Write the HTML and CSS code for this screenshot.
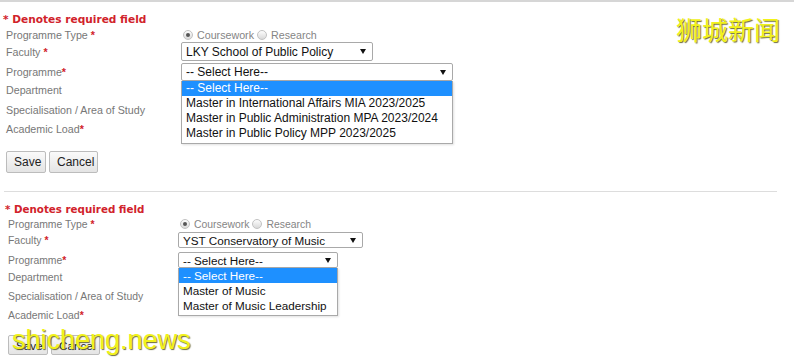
FILE: index.html
```html
<!DOCTYPE html>
<html>
<head>
    <title>Programme Selection</title>
    <link rel="stylesheet" href="styles.css">
</head>
<body>
    <div class="topline"></div>

    <div class="form-block first">
        <div class="required">* Denotes required field</div>
        <div class="row row-type">
            <div class="label">Programme Type <span class="req">*</span></div>
            <div class="field radios">
                <span class="radio checked"></span><span class="radio-text">Coursework</span>
                <span class="radio"></span><span class="radio-text">Research</span>
            </div>
        </div>
        <div class="row row-faculty">
            <div class="label">Faculty <span class="req">*</span></div>
            <div class="field">
                <div class="select faculty-select"><span>LKY School of Public Policy</span><span class="arrow"></span></div>
            </div>
        </div>
        <div class="row row-programme">
            <div class="label">Programme<span class="req">*</span></div>
            <div class="field">
                <div class="select programme-select"><span>-- Select Here--</span><span class="arrow"></span></div>
                <ul class="dropdown">
                    <li class="selected">-- Select Here--</li>
                    <li>Master in International Affairs MIA 2023/2025</li>
                    <li>Master in Public Administration MPA 2023/2024</li>
                    <li>Master in Public Policy MPP 2023/2025</li>
                </ul>
            </div>
        </div>
        <div class="row row-dept">
            <div class="label">Department</div>
        </div>
        <div class="row row-spec">
            <div class="label">Specialisation / Area of Study</div>
        </div>
        <div class="row row-load">
            <div class="label">Academic Load<span class="req">*</span></div>
        </div>
        <div class="buttons">
            <button type="button" class="btn btn-save">Save</button>
            <button type="button" class="btn btn-cancel">Cancel</button>
        </div>
    </div>

    <div class="divider"></div>

    <div class="form-block second">
        <div class="required">* Denotes required field</div>
        <div class="row row-type">
            <div class="label">Programme Type <span class="req">*</span></div>
            <div class="field radios">
                <span class="radio checked"></span><span class="radio-text">Coursework</span>
                <span class="radio"></span><span class="radio-text">Research</span>
            </div>
        </div>
        <div class="row row-faculty">
            <div class="label">Faculty <span class="req">*</span></div>
            <div class="field">
                <div class="select faculty-select"><span>YST Conservatory of Music</span><span class="arrow"></span></div>
            </div>
        </div>
        <div class="row row-programme">
            <div class="label">Programme<span class="req">*</span></div>
            <div class="field">
                <div class="select programme-select"><span>-- Select Here--</span><span class="arrow"></span></div>
                <ul class="dropdown">
                    <li class="selected">-- Select Here--</li>
                    <li>Master of Music</li>
                    <li>Master of Music Leadership</li>
                </ul>
            </div>
        </div>
        <div class="row row-dept">
            <div class="label">Department</div>
        </div>
        <div class="row row-spec">
            <div class="label">Specialisation / Area of Study</div>
        </div>
        <div class="row row-load">
            <div class="label">Academic Load<span class="req">*</span></div>
        </div>
        <div class="buttons">
            <button type="button" class="btn btn-save">Save</button>
            <button type="button" class="btn btn-cancel">Cancel</button>
        </div>
    </div>

    <div class="watermark watermark-cn">狮城新闻</div>
    <div class="watermark watermark-en">shicheng.news</div>
</body>
</html>
```

FILE: styles.css
```css
body {
    margin: 0;
    padding: 0;
    width: 794px;
    height: 364px;
    overflow: hidden;
    background-color: #ffffff;
    font-family: "Liberation Sans", Arial, sans-serif;
    position: relative;
}

.topline {
    height: 2px;
    background-color: #d6d6d6;
}

/* form blocks */
.form-block {
    --label-size: 10.7px;
    --field-size: 12px;
    --label-width: 175px;
}

.first {
    padding: 9px 0 0 6px;
}

.second {
    --label-size: 10.4px;
    --field-size: 11.7px;
    --label-width: 170px;
    padding: 10px 0 0 8px;
}

.required {
    font-family: "DejaVu Sans", Verdana, sans-serif;
    font-weight: bold;
    font-size: 10.6px;
    line-height: 16px;
    color: #d1222b;
    margin-left: -3px;
}

.second .required {
    font-size: 10.3px;
    line-height: 15px;
}

.row {
    display: flex;
    align-items: center;
}

.label {
    width: var(--label-width);
    flex-shrink: 0;
    font-size: var(--label-size);
    color: #777777;
    white-space: nowrap;
}

.req {
    color: #d1222b;
    font-weight: bold;
}

.field {
    position: relative;
    display: flex;
    align-items: center;
}

/* radios */
.radios {
    font-size: var(--label-size);
    color: #858585;
}

.radio {
    width: 10px;
    height: 10px;
    border-radius: 50%;
    border: 1px solid #c2c2c2;
    background: linear-gradient(#fdfdfd, #d9d9d9);
    box-sizing: border-box;
    margin: 0 4px 0 2px;
    position: relative;
}

.radio.checked::after {
    content: "";
    position: absolute;
    left: 2px;
    top: 2px;
    width: 4px;
    height: 4px;
    border-radius: 50%;
    background-color: #555555;
}

.radio-text {
    margin-right: 1px;
}

/* selects */
.select {
    display: flex;
    align-items: center;
    justify-content: space-between;
    box-sizing: border-box;
    border: 1px solid #a9a9a9;
    border-radius: 2px;
    background-color: #ffffff;
    padding: 0 6px 0 4px;
    font-size: var(--field-size);
    color: #111111;
    white-space: nowrap;
}

.arrow {
    width: 0;
    height: 0;
    border-left: 3px solid transparent;
    border-right: 3px solid transparent;
    border-top: 5px solid #111111;
}

.first .row-type { height: 15px; }
.first .row-faculty { height: 19px; }
.first .row-programme { height: 18px; margin-top: 2px; }
.first .row-dept { height: 18px; }
.first .row-spec { height: 21px; }
.first .row-load { height: 18px; }
.first .faculty-select { width: 192px; height: 19px; }
.first .programme-select { width: 272px; height: 18px; }

.second .row-type { height: 14px; }
.second .row-faculty { height: 16px; margin-top: 1px; }
.second .row-programme { height: 16px; margin-top: 4px; }
.second .row-dept { height: 18px; }
.second .row-spec { height: 21px; }
.second .row-load { height: 16px; }
.second .faculty-select { width: 185px; height: 16px; }
.second .programme-select { width: 160px; height: 16px; }

/* open option list, lies over the rows below */
.dropdown {
    position: absolute;
    left: 0;
    top: 100%;
    margin: 0;
    padding: 0 0 2px 0;
    list-style: none;
    box-sizing: border-box;
    border: 1px solid #a9a9a9;
    border-top: none;
    background-color: #ffffff;
    box-shadow: 1px 1px 2px rgba(0, 0, 0, 0.12);
    z-index: 2;
    width: 100%;
}

.dropdown li {
    height: 15px;
    line-height: 15px;
    padding-left: 4px;
    font-size: var(--field-size);
    color: #111111;
    white-space: nowrap;
}

.dropdown li.selected {
    background-color: #1e90ff;
    color: #ffffff;
}

/* buttons */
.buttons {
    display: flex;
    gap: 3px;
    margin-top: 12px;
}

.first .buttons {
    margin-top: 13px;
}

.btn {
    font-family: "Liberation Sans", Arial, sans-serif;
    font-size: 12px;
    color: #222222;
    height: 22px;
    padding: 0 7px;
    border: 1px solid #bcbcbc;
    border-radius: 2px;
    background: linear-gradient(#fafafa, #e4e4e4);
}

.second .btn {
    height: 20px;
    font-size: 11.7px;
}

.btn-save { width: 40px; }
.btn-cancel { width: 49px; }

.divider {
    height: 1px;
    margin: 18px 17px 0 4px;
    background-color: #dddddd;
}

/* watermarks on top of the screenshot */
.watermark {
    position: absolute;
    color: #f2f21a;
    text-shadow: 1px 1px 1px #6b6b3a;
    white-space: nowrap;
    z-index: 5;
}

.watermark-cn {
    left: 676px;
    top: 13px;
    font-family: "Noto Sans CJK SC", sans-serif;
    font-size: 26px;
    line-height: 32px;
}

.watermark-en {
    left: 12px;
    top: 320px;
    font-family: "Liberation Sans", Arial, sans-serif;
    font-size: 27px;
    line-height: 40px;
}
```
